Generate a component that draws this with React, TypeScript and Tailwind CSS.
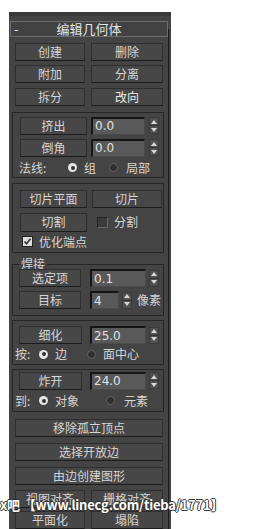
import React from 'react'

const CN = "font-['Noto_Sans_CJK_SC','Noto_Sans',sans-serif]"
const NUM = "font-['DejaVu_Sans','Liberation_Sans',sans-serif]"

function Btn({ children, className = '' }: { children: React.ReactNode; className?: string }) {
  return (
    <div
      className={`flex items-center justify-center h-[18px] bg-[#474747] border border-[#2e2e2e] border-b-[#1c1c1c] text-[12px] leading-none text-[#d6d6d6] ${className}`}
    >
      {children}
    </div>
  )
}

function Spinner() {
  return (
    <div className="flex flex-col w-[10px] h-[17px] bg-[#505050] border border-[#3a3a3a]">
      <div className="flex-1 flex items-center justify-center border-b border-[#333]">
        <svg width="6" height="4" viewBox="0 0 6 4"><path d="M0 4L3 0L6 4Z" fill="#d8d8d8" /></svg>
      </div>
      <div className="flex-1 flex items-center justify-center">
        <svg width="6" height="4" viewBox="0 0 6 4"><path d="M0 0L3 4L6 0Z" fill="#d8d8d8" /></svg>
      </div>
    </div>
  )
}

function Field({ value, w }: { value: string; w: number }) {
  return (
    <div
      className={`h-[18px] bg-[#595959] border-t-2 border-l-2 border-[#151515] border-r border-b border-r-[#4a4a4a] border-b-[#4a4a4a] flex items-center pl-[2px] text-[12px] leading-none text-[#e2e2e2] ${NUM}`}
      style={{ width: w }}
    >
      {value}
    </div>
  )
}

function Radio({ on }: { on?: boolean }) {
  return on ? (
    <span className="inline-flex items-center justify-center w-[9px] h-[9px] rounded-full bg-[#e6e6e6]">
      <span className="w-[4px] h-[4px] rounded-full bg-[#333]" />
    </span>
  ) : (
    <span className="inline-flex items-center justify-center w-[9px] h-[9px] rounded-full bg-[#2e2e2e] border border-[#666]" />
  )
}

function Group({ children, className = '' }: { children: React.ReactNode; className?: string }) {
  return (
    <div className={`ml-[3px] w-[152px] border border-[#262626] ${className}`}>{children}</div>
  )
}

export default function App() {
  return (
    <div className={`relative w-[271px] h-[529px] bg-white overflow-hidden pt-[12px] pl-[9px] ${CN}`}>
      <div className="flex w-[162px] h-[517px] bg-[#444444]">
        <div className="w-[159px] flex flex-col">
          <div className="h-[4px] bg-[#3a3a3a] w-[162px]" />

          {/* title bar */}
          <div className="mt-[5px] ml-[1px] w-[158px] h-[16px] border border-[#6c6c6c] bg-[#424242] flex items-center text-[13px] leading-none text-[#e4e4e4]">
            <span className="w-[14px] pl-[3px]">-</span>
            <span className="flex-1 text-center pr-[14px]">编辑几何体</span>
          </div>

          {/* top buttons */}
          <div className="mt-[6px] ml-[6px] flex gap-[6px]">
            <Btn className="w-[70px]">创建</Btn>
            <Btn className="w-[72px]">删除</Btn>
          </div>
          <div className="mt-[4px] ml-[6px] flex gap-[6px]">
            <Btn className="w-[70px]">附加</Btn>
            <Btn className="w-[72px]">分离</Btn>
          </div>
          <div className="mt-[5px] ml-[6px] flex gap-[6px]">
            <Btn className="w-[70px]">拆分</Btn>
            <Btn className="w-[72px] text-[#ececec]">改向</Btn>
          </div>

          {/* extrude / chamfer */}
          <Group className="mt-[6px] h-[67px]">
            <div className="mt-[4px] ml-[7px] flex items-center">
              <Btn className="w-[67px]">挤出</Btn>
              <div className="ml-[4px]"><Field value="0.0" w={54} /></div>
              <div className="ml-[4px]"><Spinner /></div>
            </div>
            <div className="mt-[4px] ml-[7px] flex items-center">
              <Btn className="w-[67px]">倒角</Btn>
              <div className="ml-[4px]"><Field value="0.0" w={54} /></div>
              <div className="ml-[4px]"><Spinner /></div>
            </div>
            <div className="mt-[3px] ml-[6px] flex items-center h-[16px] text-[12px] leading-none text-[#d6d6d6]">
              <span className="w-[49px]">法线:</span>
              <Radio on />
              <span className="ml-[7px] w-[25px]">组</span>
              <Radio />
              <span className="ml-[8px]">局部</span>
            </div>
          </Group>

          {/* slice */}
          <Group className="mt-[5px] h-[72px]">
            <div className="mt-[6px] ml-[7px] flex gap-[5px]">
              <Btn className="w-[67px]">切片平面</Btn>
              <Btn className="w-[70px]">切片</Btn>
            </div>
            <div className="mt-[5px] ml-[7px] flex items-center">
              <Btn className="w-[67px] h-[19px]">切割</Btn>
              <span className="ml-[10px] w-[11px] h-[11px] bg-[#3a3a3a] border border-[#222] border-r-[#666] border-b-[#666]" />
              <span className="ml-[6px] text-[12px] leading-none text-[#d6d6d6]">分割</span>
            </div>
            <div className="mt-[4px] ml-[9px] flex items-center">
              <span className="w-[11px] h-[11px] bg-[#dcdcdc] border border-[#222] flex items-center justify-center">
                <svg width="9" height="9" viewBox="0 0 9 9">
                  <path d="M1.5 4.5L3.5 6.8L7.5 1.8" stroke="#333" strokeWidth="1.6" fill="none" />
                </svg>
              </span>
              <span className="ml-[6px] text-[12px] leading-none text-[#d6d6d6]">优化端点</span>
            </div>
          </Group>

          {/* weld */}
          <fieldset className="mt-[4px] ml-[3px] w-[152px] h-[60px] border border-[#262626] px-0 pb-0">
            <legend className="ml-[6px] px-[2px] text-[12px] leading-[14px] text-[#d6d6d6]">焊接</legend>
            <div className="mt-[-2px] ml-[6px] flex items-center">
              <Btn className="w-[62px]">选定项</Btn>
              <div className="ml-[9px]"><Field value="0.1" w={56} /></div>
              <div className="ml-[3px]"><Spinner /></div>
            </div>
            <div className="mt-[4px] ml-[6px] flex items-center">
              <Btn className="w-[62px]">目标</Btn>
              <div className="ml-[9px]"><Field value="4" w={29} /></div>
              <div className="ml-[3px]"><Spinner /></div>
              <span className="ml-[5px] text-[12px] leading-none text-[#d6d6d6]">像素</span>
            </div>
          </fieldset>

          {/* tessellate */}
          <Group className="mt-[4px] h-[45px]">
            <div className="mt-[5px] ml-[6px] flex items-center">
              <Btn className="w-[63px]">细化</Btn>
              <div className="ml-[8px]"><Field value="25.0" w={56} /></div>
              <div className="ml-[3px]"><Spinner /></div>
            </div>
            <div className="mt-[2px] ml-[2px] flex items-center h-[16px] text-[12px] leading-none text-[#d6d6d6]">
              <span className="w-[24px]">按:</span>
              <Radio on />
              <span className="ml-[7px] w-[32px]">边</span>
              <Radio />
              <span className="ml-[7px]">面中心</span>
            </div>
          </Group>

          {/* explode */}
          <Group className="mt-[4px] h-[44px]">
            <div className="mt-[2px] ml-[6px] flex items-center">
              <Btn className="w-[63px]">炸开</Btn>
              <div className="ml-[8px]"><Field value="24.0" w={56} /></div>
              <div className="ml-[3px]"><Spinner /></div>
            </div>
            <div className="mt-[3px] ml-[2px] flex items-center h-[16px] text-[12px] leading-none text-[#d6d6d6]">
              <span className="w-[24px]">到:</span>
              <Radio on />
              <span className="ml-[7px] w-[51px]">对象</span>
              <Radio />
              <span className="ml-[9px]">元素</span>
            </div>
          </Group>

          {/* bottom buttons */}
          <div className="mt-[7px] ml-[6px] flex flex-col gap-[6px]">
            <Btn className="w-[148px]">移除孤立顶点</Btn>
            <Btn className="w-[148px]">选择开放边</Btn>
            <Btn className="w-[148px]">由边创建图形</Btn>
          </div>
          <div className="mt-[5px] ml-[6px] flex gap-[6px]">
            <Btn className="w-[70px]">视图对齐</Btn>
            <Btn className="w-[72px]">栅格对齐</Btn>
          </div>
          <div className="mt-[3px] ml-[6px] flex gap-[6px]">
            <Btn className="w-[70px]">平面化</Btn>
            <Btn className="w-[72px]">塌陷</Btn>
          </div>
        </div>
        <div className="mt-[17px] w-px bg-[#1c1c1c]" />
      </div>

      {/* watermark */}
      <div
        className={`absolute left-0 top-[498px] whitespace-nowrap text-[13px] font-bold leading-none tracking-[-0.2px] text-white ${CN} [text-shadow:-1px_0_#333,1px_0_#333,0_-1px_#333,0_1px_#333]`}
      >
        x吧 【www.linecg.com/tieba/1771】
      </div>
    </div>
  )
}
